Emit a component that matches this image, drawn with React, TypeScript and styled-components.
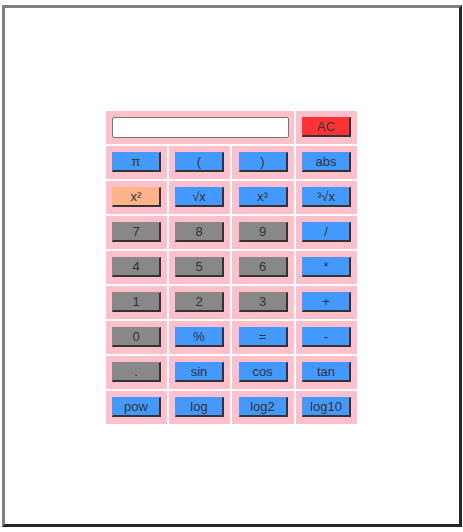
import styled, { createGlobalStyle } from "styled-components";

const GlobalStyle = createGlobalStyle`
  html, body {
    margin: 0;
    padding: 0;
    background: #ffffff;
  }
  body {
    font-family: "Liberation Sans", Arial, sans-serif;
  }
`;

type Kind = "fn" | "num" | "sq" | "clear";

const colors: Record<Kind, string> = {
  fn: "#4499ff",
  num: "#888888",
  sq: "#ffb38a",
  clear: "#ff3333",
};

const rows: { label: string; kind: Kind }[][] = [
  [
    { label: "π", kind: "fn" },
    { label: "(", kind: "fn" },
    { label: ")", kind: "fn" },
    { label: "abs", kind: "fn" },
  ],
  [
    { label: "x²", kind: "sq" },
    { label: "√x", kind: "fn" },
    { label: "x³", kind: "fn" },
    { label: "³√x", kind: "fn" },
  ],
  [
    { label: "7", kind: "num" },
    { label: "8", kind: "num" },
    { label: "9", kind: "num" },
    { label: "/", kind: "fn" },
  ],
  [
    { label: "4", kind: "num" },
    { label: "5", kind: "num" },
    { label: "6", kind: "num" },
    { label: "*", kind: "fn" },
  ],
  [
    { label: "1", kind: "num" },
    { label: "2", kind: "num" },
    { label: "3", kind: "num" },
    { label: "+", kind: "fn" },
  ],
  [
    { label: "0", kind: "num" },
    { label: "%", kind: "fn" },
    { label: "=", kind: "fn" },
    { label: "-", kind: "fn" },
  ],
  [
    { label: ".", kind: "num" },
    { label: "sin", kind: "fn" },
    { label: "cos", kind: "fn" },
    { label: "tan", kind: "fn" },
  ],
  [
    { label: "pow", kind: "fn" },
    { label: "log", kind: "fn" },
    { label: "log2", kind: "fn" },
    { label: "log10", kind: "fn" },
  ],
];

export default function App() {
  return (
    <>
      <GlobalStyle />
      <Frame>
        <Keypad>
          <Cell $span={3}>
            <Display type="text" readOnly />
          </Cell>
          <Cell>
            <Key $kind="clear">AC</Key>
          </Cell>
          {rows.flat().map((k, i) => (
            <Cell key={i}>
              <Key $kind={k.kind}>{k.label}</Key>
            </Cell>
          ))}
        </Keypad>
      </Frame>
    </>
  );
}

const Frame = styled.div`
  box-sizing: border-box;
  width: 460px;
  height: 522px;
  margin: 5px 0 0 2px;
  border: 3px solid;
  border-color: #7f7f7f #262626 #262626 #7f7f7f;
  display: flex;
  align-items: center;
  justify-content: center;
  padding-top: 2px;
  padding-right: 1px;
`;

const Keypad = styled.div`
  display: grid;
  grid-template-columns: 61px 61px 62px 61px;
  grid-auto-rows: 33px;
  gap: 2px;
  background: #ffffff;
`;

const Cell = styled.div<{ $span?: number }>`
  grid-column: span ${(p) => p.$span ?? 1};
  background: #ffc0cb;
  display: flex;
  align-items: center;
  justify-content: center;
`;

const Display = styled.input`
  box-sizing: border-box;
  width: 177px;
  height: 21px;
  margin: 0;
  padding: 0 3px;
  border: 1px solid #767676;
  border-radius: 2px;
  background: #ffffff;
  outline: none;
`;

const Key = styled.button<{ $kind: Kind }>`
  box-sizing: border-box;
  width: 49px;
  height: 20px;
  margin: 0;
  padding: 0;
  border-style: solid;
  border-width: 1px 2px 2px 1px;
  border-color: ${(p) => colors[p.$kind]} #333333 #333333
    ${(p) => colors[p.$kind]};
  background: ${(p) => colors[p.$kind]};
  color: #333333;
  font-family: "Liberation Sans", Arial, sans-serif;
  font-size: 13px;
  line-height: 16px;
  cursor: pointer;
`;
